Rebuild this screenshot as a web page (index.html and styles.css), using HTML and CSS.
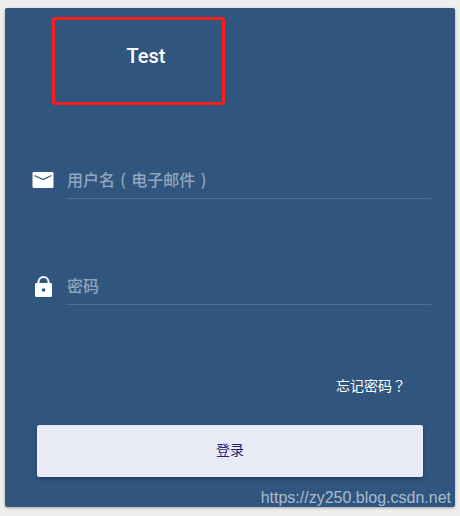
FILE: index.html
```html
<!DOCTYPE html>
<html>
<head>
    <meta charset="UTF-8">
    <meta name="viewport" content="width=device-width, initial-scale=1.0">
    <title>login</title>
    <link rel="stylesheet" href="styles.css">
</head>
<body>
    <div class="card">
        <div class="logo">Test</div>

        <div class="field field-user">
            <svg class="icon" width="22" height="17" viewBox="0 0 22 17">
                <rect x="0.5" width="21" height="16" rx="1.2" fill="#fff"/>
                <path d="M2.5 3.5 L11 7.5 L19.5 3.5" fill="none" stroke="#30567f" stroke-width="1.3"/>
            </svg>
            <input class="input" type="text" placeholder="用户名&#8196;(&#8196;电子邮件&#8196;)">
        </div>

        <div class="field field-pass">
            <svg class="icon" width="18" height="22" viewBox="0 0 18 22">
                <path d="M3.5 8 V6 a5 5 0 0 1 10 0 V8" fill="none" stroke="#fff" stroke-width="2"/>
                <rect y="7" width="17" height="14" rx="1.2" fill="#fff"/>
                <circle cx="8.5" cy="14" r="1.8" fill="#30567f"/>
            </svg>
            <input class="input" type="password" placeholder="密码">
        </div>

        <div class="forgot"><a href="#">忘记密码<span class="punct">？</span></a></div>

        <button class="login-btn" type="button">登录</button>
    </div>

    <div class="watermark">https://zy250.blog.csdn.net</div>
</body>
</html>
```

FILE: styles.css
```css
body {
    margin: 0;
    padding: 8px 5px 9px;
    background-color: #eeeeee;
    font-family: "Roboto", "Noto Sans CJK SC", sans-serif;
    position: relative;
    height: 516px;
    box-sizing: border-box;
    overflow: hidden;
}

.card {
    height: 499px;
    padding: 9px 32px 0;
    box-sizing: border-box;
    background-color: #30567f;
    border-radius: 2px;
    box-shadow: 0 1px 3px rgba(0, 0, 0, 0.3);
}

.logo {
    width: 173px;
    height: 88px;
    margin-left: 15px;
    padding: 0 0 10px 15px;
    box-sizing: border-box;
    border: 3px solid #f5201c;
    border-radius: 3px;
    display: flex;
    justify-content: center;
    align-items: center;
    color: white;
    font-size: 20px;
    font-weight: 500;
}

.field {
    display: flex;
    align-items: flex-start;
    margin-left: -5px;
}

.field-user {
    margin-top: 57px;
}

.field-pass {
    margin-top: 69px;
}

.icon {
    flex: none;
    margin: 10px 12px 0 0;
}

.field-pass .icon {
    margin: 8px 13px 0 3px;
}

.input {
    flex: 1;
    min-width: 0;
    height: 37px;
    padding: 0 1px 2px;
    margin-right: -8px;
    box-sizing: border-box;
    background: transparent;
    border: none;
    border-bottom: 1px solid rgba(255, 255, 255, 0.15);
    outline: none;
    color: white;
    font-family: "Noto Sans CJK SC", sans-serif;
    font-size: 16px;
    font-weight: 500;
}

.input::placeholder {
    color: #92a5bb;
    opacity: 1;
}

.forgot {
    margin-top: 70px;
    padding-right: 17px;
    text-align: right;
    line-height: 20px;
}

.forgot a {
    color: white;
    font-size: 14px;
    text-decoration: none;
}

.punct {
    font-family: "Noto Sans CJK TC", sans-serif;
}

.login-btn {
    display: block;
    width: 386px;
    height: 52px;
    margin-top: 29px;
    padding: 0 0 4px;
    background-color: #e8eaf6;
    color: #1a237e;
    border: none;
    border-radius: 2px;
    box-shadow: 0 2px 5px rgba(0, 0, 0, 0.3);
    font-family: "Noto Sans CJK SC", sans-serif;
    font-size: 14px;
}

.watermark {
    position: absolute;
    right: 9px;
    bottom: 9px;
    color: rgba(255, 255, 255, 0.6);
    font-family: "Liberation Sans", sans-serif;
    font-size: 16px;
}
```
